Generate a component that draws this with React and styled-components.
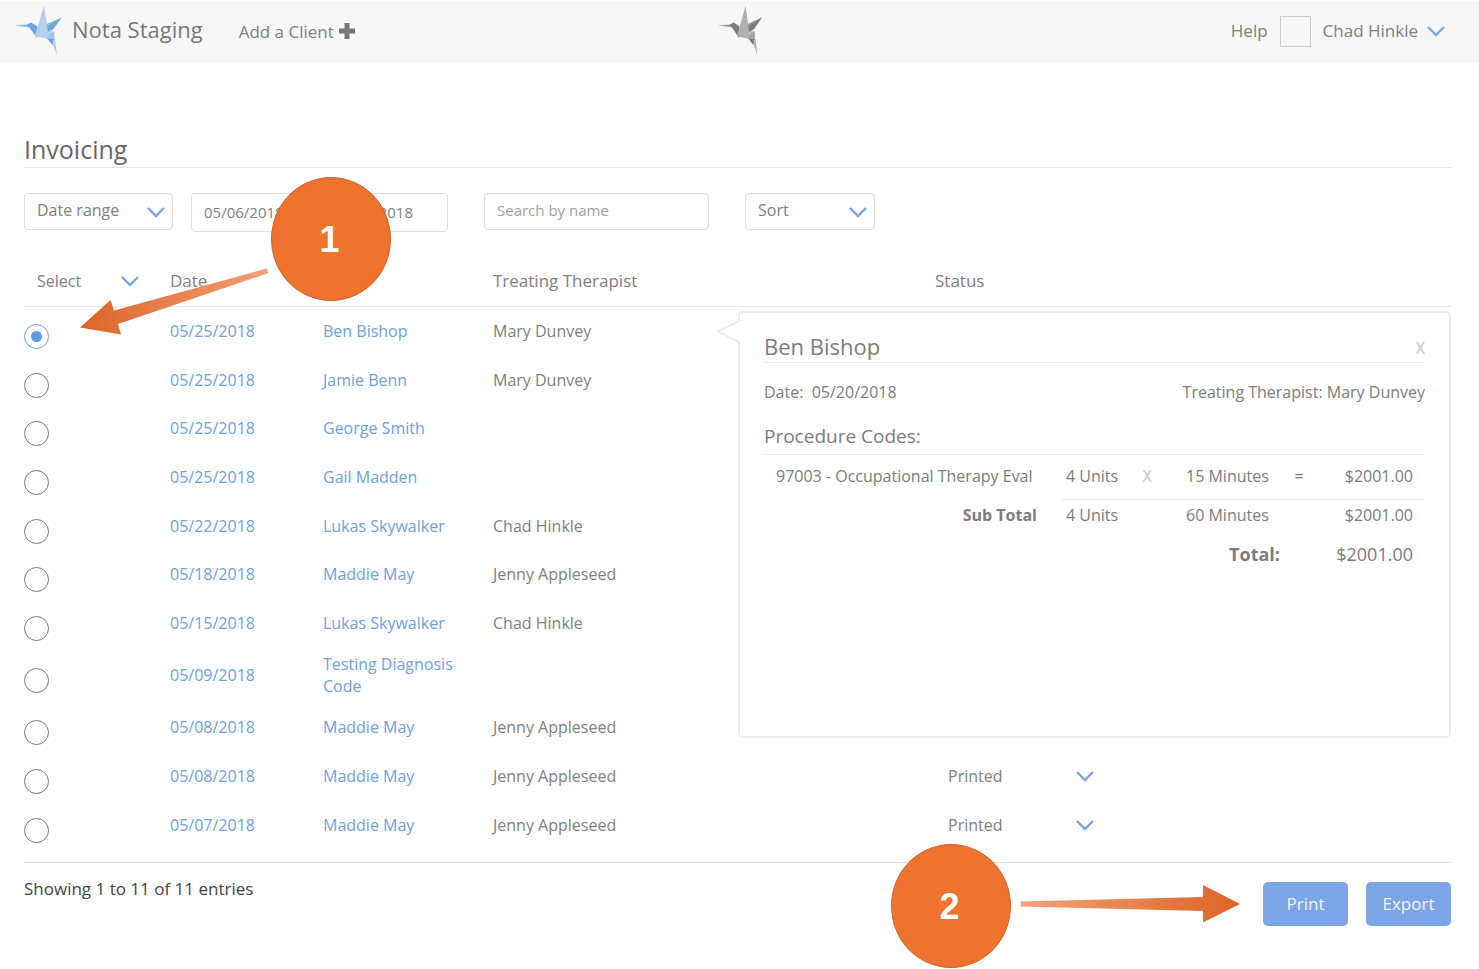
import React, { useState } from 'react';
import styled, { createGlobalStyle } from 'styled-components';

const GlobalStyle = createGlobalStyle`
  * {
    box-sizing: border-box;
  }

  body {
    margin: 0;
    background: #fff;
    color: #808080;
    font-family: 'Open Sans', sans-serif;
    font-size: 16px;
    line-height: 22px;
  }

  input,
  select,
  button {
    margin: 0;
    color: inherit;
    font-family: inherit;
    font-size: inherit;
    line-height: inherit;
  }
`;

const Page = styled.div`
  position: relative;
  padding-bottom: 43px;
`;

const Header = styled.header`
  display: grid;
  grid-template-columns: 1fr auto 1fr;
  align-items: center;
  height: 63px;
  padding: 0 14px;
  border-top: 1px solid #fff;
  background: #f7f7f7;
  font-size: 17px;
`;

const HeaderSide = styled.div`
  display: flex;
  align-items: center;
  gap: 10px;
`;

const HeaderEnd = styled.div`
  display: flex;
  align-items: center;
  justify-content: flex-end;
  gap: 12px;
  padding: 0 20px 2px 0;
`;

const Brand = styled.a`
  margin-right: 26px;
  padding-bottom: 6px;
  color: #777;
  font-size: 22px;
  line-height: 30px;
  text-decoration: none;
`;

const HeaderLink = styled.a`
  display: flex;
  align-items: center;
  gap: 4px;
  color: #808080;
  text-decoration: none;

  svg {
    margin-bottom: 2px;
  }
`;

const Avatar = styled.span`
  width: 31px;
  height: 31px;
  border: 1px solid #ccc;
`;

const UserButton = styled.button`
  display: flex;
  align-items: center;
  gap: 9px;
  padding: 0;
  border: 0;
  background: none;
`;

const Main = styled.main`
  margin: 70px 28px 0 24px;
`;

const Title = styled.h1`
  margin: 0;
  padding-bottom: 2px;
  border-bottom: 1px solid #e4e4e4;
  color: #666;
  font-size: 25px;
  font-weight: normal;
  line-height: 32px;
`;

const Filters = styled.form`
  display: flex;
  align-items: flex-start;
  margin-top: 25px;
`;

const SelectBox = styled.span`
  position: relative;
  display: block;
  width: ${props => props.$width};

  svg {
    position: absolute;
    top: 50%;
    right: ${props => (props.$bordered ? '8px' : '0')};
    margin-top: -5px;
    pointer-events: none;
  }
`;

const NativeSelect = styled.select`
  display: block;
  width: 100%;
  height: ${props => (props.$bordered ? '37px' : '24px')};
  padding: 0 12px ${props => (props.$bordered ? '3px' : '0')};
  border: ${props => (props.$bordered ? '1px solid #ddd' : '1px solid transparent')};
  border-radius: 4px;
  background: transparent;
  appearance: none;
`;

const DateRange = styled.div`
  display: flex;
  align-items: center;
  justify-content: space-between;
  width: 257px;
  height: 39px;
  margin: 0 36px 0 18px;
  padding: 0 34px 2px 12px;
  border: 1px solid #ddd;
  border-radius: 4px;
  font-size: 15px;
`;

const DateInput = styled.input`
  width: 84px;
  padding: 0;
  border: 0;
  background: none;
  text-align: ${props => props.$align};
`;

const SearchInput = styled.input`
  width: 225px;
  height: 37px;
  margin-right: 36px;
  padding: 0 12px 3px;
  border: 1px solid #ddd;
  border-radius: 4px;
  font-size: 15px;

  &::placeholder {
    color: #a0a0a0;
    opacity: 1;
  }
`;

const Invoices = styled.section`
  position: relative;
  margin-top: 24px;
  padding-bottom: 13px;
  border-bottom: 1px solid #e4e4e4;
`;

const InvoiceTable = styled.table`
  width: 100%;
  border-collapse: collapse;
  table-layout: fixed;

  th {
    height: 50px;
    padding: 0;
    border-bottom: 1px solid #e4e4e4;
    font-size: 17px;
    font-weight: normal;
    text-align: left;
  }

  select {
    font-size: 16px;
  }
`;

const InvoiceRow = styled.tr`
  height: 49px;

  &:nth-child(3n) {
    height: 48px;
  }

  td {
    padding: 0;
  }

  td:nth-child(3) {
    padding: 6px 20px 6px 0;
  }

  td:first-child {
    padding-top: 11px;
  }
`;

const Radio = styled.input`
  display: block;
  width: 25px;
  height: 25px;
  border: 1px solid #777;
  border-radius: 50%;
  appearance: none;

  &:checked {
    border-color: #6b9ee8;
    background: radial-gradient(circle, #6098ea 5px, transparent 6px);
  }
`;

const Link = styled.a`
  color: #6c9fe6;
  text-decoration: none;
`;

const Popover = styled.aside`
  position: absolute;
  top: 55px;
  right: 0;
  left: 714px;
  height: 427px;
  padding: 18px 24px;
  border: 2px solid #ececec;
  border-radius: 5px;
  background: #fff;
  color: #7c7c7c;
`;

const Pointer = styled.svg`
  position: absolute;
  top: 6px;
  left: -24px;
`;

const PopoverHeader = styled.div`
  display: flex;
  align-items: center;
  justify-content: space-between;
  padding-bottom: 1px;
  border-bottom: 1px solid #e8e8e8;
`;

const PopoverTitle = styled.h2`
  margin: 0;
  font-size: 22px;
  font-weight: normal;
  line-height: 30px;
`;

const CloseButton = styled.button`
  padding: 4px 0 0;
  border: 0;
  background: none;
  color: #c4c4c4;
`;

const PopoverMeta = styled.div`
  display: flex;
  justify-content: space-between;
  margin-top: 18px;
`;

const PopoverSubtitle = styled.h3`
  margin: 19px 0 0;
  padding-bottom: 4px;
  border-bottom: 1px solid #e8e8e8;
  font-size: 19px;
  font-weight: normal;
  line-height: 28px;
`;

const CodeTable = styled.table`
  width: 100%;
  border-collapse: collapse;
  table-layout: fixed;

  td,
  th {
    height: 44px;
    padding: 0 0 2px;
    text-align: left;
    white-space: nowrap;
  }

  td:last-child {
    padding-right: 12px;
    text-align: right;
  }
`;

const CodeName = styled.td`
  && {
    padding-left: 12px;
  }
`;

const Units = styled.td`
  && {
    padding-left: 4px;
  }
`;

const Minutes = styled.td`
  && {
    padding-left: 24px;
  }
`;

const Operator = styled.td`
  && {
    color: ${props => (props.$faint ? '#c4c4c4' : 'inherit')};
    text-align: center;
  }
`;

const SubTotalRow = styled.tr`
  && td,
  && th {
    height: 34px;
  }

  td {
    border-top: 1px solid #e8e8e8;
  }

  && th {
    padding-right: 25px;
    text-align: right;
  }
`;

const TotalRow = styled.tr`
  font-size: 18px;

  && th {
    text-align: right;
  }
`;

const Footer = styled.footer`
  display: flex;
  align-items: flex-start;
  justify-content: space-between;
  margin-top: 15px;
`;

const Summary = styled.p`
  margin: 0;
  color: #444;
  font-size: 17px;
`;

const Actions = styled.div`
  display: flex;
  gap: 18px;
  margin-top: 4px;
`;

const ActionButton = styled.button`
  height: 44px;
  min-width: 85px;
  padding: 0 16px;
  border: 0;
  border-radius: 5px;
  background: #7da4e5;
  color: #f2f6fd;
  font-size: 17px;
`;

const Step = styled.span`
  position: absolute;
  top: ${props => props.$top}px;
  left: ${props => props.$left}px;
  display: flex;
  align-items: center;
  justify-content: center;
  width: 120px;
  height: 124px;
  padding: 2px 3px 0 0;
  border: 1px solid #d2622a;
  border-radius: 50%;
  background: #f0722f;
  color: #fff;
  font: bold 36px 'Liberation Sans', sans-serif;
`;

const Arrow = styled.svg`
  position: absolute;
  top: ${props => props.$top}px;
  left: ${props => props.$left}px;
  pointer-events: none;
`;

function Chevron() {
  return (
    <svg width="18" height="11" viewBox="0 0 18 11" fill="none">
      <path d="M1 1l8 8 8-8" stroke="#79a3e6" strokeWidth="2.4" />
    </svg>
  );
}

function Hummingbird({ colors, width }) {
  const [light, mid, dark] = colors;
  return (
    <svg width={width} height="54" viewBox="4 5 48 54" preserveAspectRatio="none">
      <path d="M4 25.300L18 24.500l1.500 3z" fill={mid} />
      <path d="M17 24.500l4-2 6 3.500 2 5-2 7z" fill={dark} />
      <path d="M52 17.500L36 24.500l1 8 6-3z" fill={dark} />
      <path d="M52 17.500L36 27v-2.500z" fill={mid} />
      <path d="M34 5.500L25 36l14 3-2-14z" fill={light} />
      <path d="M26 33l11-1 2 7-14-3z" fill={light} />
      <path d="M39 31l5 .5-.5 7.500-6.500-1z" fill={light} />
      <path d="M38 37l6-5.500 1 8.500-6-1z" fill={mid} opacity="0.6" />
      <path d="M37 38.500l7 .5-1.500 6z" fill={dark} />
      <path d="M42.500 44l2.500-5 2 16z" fill={light} />
    </svg>
  );
}

function Dropdown({ label, options, width, bordered }) {
  return (
    <SelectBox $width={width} $bordered={bordered}>
      <NativeSelect aria-label={label} $bordered={bordered}>
        {options.map(option => (
          <option key={option}>{option}</option>
        ))}
      </NativeSelect>
      <Chevron />
    </SelectBox>
  );
}

const invoices = [
  { date: '05/25/2018', client: 'Ben Bishop', therapist: 'Mary Dunvey' },
  { date: '05/25/2018', client: 'Jamie Benn', therapist: 'Mary Dunvey' },
  { date: '05/25/2018', client: 'George Smith' },
  { date: '05/25/2018', client: 'Gail Madden' },
  { date: '05/22/2018', client: 'Lukas Skywalker', therapist: 'Chad Hinkle' },
  { date: '05/18/2018', client: 'Maddie May', therapist: 'Jenny Appleseed' },
  { date: '05/15/2018', client: 'Lukas Skywalker', therapist: 'Chad Hinkle' },
  { date: '05/09/2018', client: 'Testing Diagnosis Code' },
  { date: '05/08/2018', client: 'Maddie May', therapist: 'Jenny Appleseed' },
  { date: '05/08/2018', client: 'Maddie May', therapist: 'Jenny Appleseed', status: 'Printed' },
  { date: '05/07/2018', client: 'Maddie May', therapist: 'Jenny Appleseed', status: 'Printed' },
];

function InvoicePopover() {
  return (
    <Popover>
      <Pointer width="24" height="25" viewBox="0 0 24 25">
        <path d="M24 1.500L1 12.500 24 23.500z" fill="#fff" />
        <path d="M23 2L1.500 12.500 23 23" fill="none" stroke="#e8e8e8" strokeWidth="1.500" />
      </Pointer>
      <PopoverHeader>
        <PopoverTitle>Ben Bishop</PopoverTitle>
        <CloseButton type="button" aria-label="Close">X</CloseButton>
      </PopoverHeader>
      <PopoverMeta>
        <span>Date: &nbsp;05/20/2018</span>
        <span>Treating Therapist: Mary Dunvey</span>
      </PopoverMeta>
      <PopoverSubtitle>Procedure Codes:</PopoverSubtitle>
      <CodeTable>
        <colgroup>
          <col />
          <col width="70" />
          <col width="30" />
          <col width="118" />
          <col width="38" />
          <col width="107" />
        </colgroup>
        <tbody>
          <tr>
            <CodeName>97003 - Occupational Therapy Eval</CodeName>
            <Units>4 Units</Units>
            <Operator $faint>X</Operator>
            <Minutes>15 Minutes</Minutes>
            <Operator>=</Operator>
            <td>$2001.00</td>
          </tr>
          <SubTotalRow>
            <th scope="row">Sub Total</th>
            <Units>4 Units</Units>
            <td />
            <Minutes>60 Minutes</Minutes>
            <td />
            <td>$2001.00</td>
          </SubTotalRow>
          <TotalRow>
            <th scope="row" colSpan="4">Total:</th>
            <td colSpan="2">$2001.00</td>
          </TotalRow>
        </tbody>
      </CodeTable>
    </Popover>
  );
}

function App() {
  const [selected, setSelected] = useState(0);

  return (
    <Page>
      <GlobalStyle />
      <Header>
        <HeaderSide>
          <Hummingbird colors={['#b3cfeb', '#8fbbe2', '#6fa8dc']} width="48" />
          <Brand href="#home">Nota Staging</Brand>
          <HeaderLink href="#add">
            Add a Client
            <svg width="18" height="18" viewBox="0 0 18 18">
              <path d="M6.500 1h5v5.500H17v5h-5.500V17h-5v-5.500H1v-5h5.500z" fill="#777" />
            </svg>
          </HeaderLink>
        </HeaderSide>
        <Hummingbird colors={['#b0b0b0', '#999', '#7c7c7c']} width="44" />
        <HeaderEnd>
          <HeaderLink href="#help">Help</HeaderLink>
          <Avatar />
          <UserButton type="button">
            Chad Hinkle
            <Chevron />
          </UserButton>
        </HeaderEnd>
      </Header>

      <Main>
        <Title>Invoicing</Title>
        <Filters>
          <Dropdown label="Date range" options={['Date range']} width="149px" bordered />
          <DateRange>
            <DateInput aria-label="From" defaultValue="05/06/2018" />
            <DateInput aria-label="To" defaultValue="06/06/2018" $align="right" />
          </DateRange>
          <SearchInput aria-label="Search by name" placeholder="Search by name" />
          <Dropdown label="Sort" options={['Sort']} width="130px" bordered />
        </Filters>

        <Invoices>
          <InvoiceTable>
            <colgroup>
              <col width="146" />
              <col width="153" />
              <col width="170" />
              <col width="442" />
              <col />
            </colgroup>
            <thead>
              <tr>
                <th>
                  <Dropdown label="Select" options={['Select']} width="115px" />
                </th>
                <th>Date</th>
                <th aria-label="Client" />
                <th>Treating Therapist</th>
                <th>Status</th>
              </tr>
            </thead>
            <tbody>
              {invoices.map((invoice, i) => (
                <InvoiceRow key={i}>
                  <td>
                    <Radio
                      type="radio"
                      name="invoice"
                      aria-label={`Select invoice ${i + 1}`}
                      checked={selected === i}
                      onChange={() => setSelected(i)}
                    />
                  </td>
                  <td>
                    <Link href="#invoice">{invoice.date}</Link>
                  </td>
                  <td>
                    <Link href="#client">{invoice.client}</Link>
                  </td>
                  <td>{invoice.therapist}</td>
                  <td>
                    {invoice.status && (
                      <Dropdown label="Status" options={[invoice.status]} width="159px" />
                    )}
                  </td>
                </InvoiceRow>
              ))}
            </tbody>
          </InvoiceTable>
          <InvoicePopover />
        </Invoices>

        <Footer>
          <Summary>Showing 1 to 11 of 11 entries</Summary>
          <Actions>
            <ActionButton type="button">Print</ActionButton>
            <ActionButton type="button">Export</ActionButton>
          </Actions>
        </Footer>
      </Main>

      <Step $top={177} $left={271}>1</Step>
      <Arrow $top={268} $left={80} width="190" height="68" viewBox="0 0 190 68">
        <linearGradient id="toRadio" x1="0" x2="1">
          <stop offset="0" stopColor="#dc6526" />
          <stop offset="1" stopColor="#f3a078" />
        </linearGradient>
        <path d="M0 59.500L30.500 32l3.500 10.500L187 .5l1.500 4.500L38 56l3 10.500z" fill="url(#toRadio)" />
      </Arrow>

      <Step $top={844} $left={891}>2</Step>
      <Arrow $top={885} $left={1021} width="220" height="38" viewBox="0 0 220 38">
        <linearGradient id="toPrint" x1="0" x2="1">
          <stop offset="0" stopColor="#f3a078" />
          <stop offset="1" stopColor="#dc6526" />
        </linearGradient>
        <path d="M219 19L182 0v12L0 16.500v5L182 26v11.500z" fill="url(#toPrint)" />
      </Arrow>
    </Page>
  );
}

export default App;
